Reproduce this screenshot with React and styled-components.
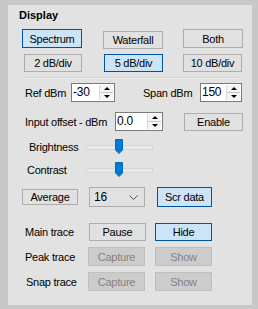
import React from 'react';
import styled, { createGlobalStyle, css } from 'styled-components';

const Global = createGlobalStyle`
	html, body { margin: 0; padding: 0; background: #c8c8c8; }
	body { font-family: "Liberation Sans", Arial, sans-serif; font-size: 11px; letter-spacing: -0.25px; color: #000; }
`;

const Frame = styled.div`
	width: 258px;
	height: 309px;
	padding: 5px 0 0 8px;
	box-sizing: border-box;
`;

const Panel = styled.div`
	width: 244px;
	height: 300px;
	background: #e2e2e2;
	box-sizing: border-box;
	padding-top: 4px;
`;

const Title = styled.div`
	font-weight: bold;
	font-size: 11px;
	letter-spacing: 0;
	line-height: 13px;
	padding-left: 11px;
`;

const Row = styled.div`
	display: flex;
	align-items: ${(p) => p.$align || 'center'};
	height: ${(p) => p.$h}px;
	margin-top: ${(p) => p.$mt}px;
	padding-left: ${(p) => p.$pl}px;
`;

const Divider = styled.div`
	height: 1px;
	margin: 5px 9px 0 16px;
	background: #d6d6d6;
	border-bottom: 1px solid #ececec;
`;

const Label = styled.span`
	width: ${(p) => p.$w}px;
	margin-left: ${(p) => p.$ml || 0}px;
	flex: none;
	line-height: 14px;
	white-space: nowrap;
`;

const Button = styled.div`
	flex: none;
	box-sizing: border-box;
	width: ${(p) => p.$w || 60}px;
	height: ${(p) => p.$h || 19}px;
	margin-left: ${(p) => p.$ml || 0}px;
	margin-top: ${(p) => p.$dy || 0}px;
	display: flex;
	align-items: center;
	justify-content: center;
	background: #e1e1e1;
	border: 1px solid #adadad;
	line-height: 14px;
	white-space: nowrap;
	${(p) =>
		p.$active &&
		css`
			background: #cce4f7;
			border-color: #005499;
		`}
	${(p) =>
		p.$disabled &&
		css`
			background: #cccccc;
			border-color: #bfbfbf;
			color: #838383;
		`}
`;

const NumBox = styled.div`
	flex: none;
	box-sizing: border-box;
	width: ${(p) => p.$w}px;
	height: 19px;
	background: #fff;
	border: 1px solid #7a7a7a;
	display: flex;
	align-items: stretch;
`;

const NumText = styled.span`
	flex: 1;
	padding-left: 1px;
	line-height: 16px;
	font-size: 12px;
`;

const Spin = styled.div`
	width: 13px;
	display: flex;
	flex-direction: column;
	border-left: 1px solid #d9d9d9;
	margin: 1px 1px 1px 0;
`;

const SpinHalf = styled.div`
	flex: 1;
	display: flex;
	align-items: center;
	justify-content: center;
	background: #f4f4f4;
	& + & { border-top: 1px solid #c8c8c8; }
`;

const Arrow = styled.div`
	width: 0;
	height: 0;
	border-left: 3px solid transparent;
	border-right: 3px solid transparent;
	${(p) => (p.$up ? 'border-bottom: 3px solid #000;' : 'border-top: 3px solid #000;')}
`;

const Track = styled.div`
	position: relative;
	flex: none;
	width: 65px;
	height: 3px;
	background: #e7eaea;
	border: 1px solid #d6d6d6;
`;

const Thumb = styled.svg`
	position: absolute;
	left: 28px;
	top: -7px;
`;

const Combo = styled.div`
	flex: none;
	box-sizing: border-box;
	width: 56px;
	height: 20px;
	margin-left: 11px;
	background: #e1e1e1;
	border: 1px solid #adadad;
	display: flex;
	align-items: center;
	justify-content: space-between;
	padding: 0 6px 0 4px;
	line-height: 14px;
	font-size: 12px;
`;

function NumericUpDown({ value, w }) {
	return (
		<NumBox $w={w}>
			<NumText>{value}</NumText>
			<Spin>
				<SpinHalf>
					<Arrow $up />
				</SpinHalf>
				<SpinHalf>
					<Arrow />
				</SpinHalf>
			</Spin>
		</NumBox>
	);
}

function Slider() {
	return (
		<Track>
			<Thumb width="8" height="15" viewBox="0 0 8 15">
				<path d="M0.5 0.5 H7.5 V11 L4 14.5 L0.5 11 Z" fill="#007ad9" stroke="#006cc1" />
			</Thumb>
		</Track>
	);
}

export default function App() {
	return (
		<Frame>
			<Global />
			<Panel>
				<Title>Display</Title>

				<Row $mt={7} $h={19} $pl={14} $align="flex-start">
					<Button $active>Spectrum</Button>
					<Button $ml={21} $h={18} $dy={2}>Waterfall</Button>
					<Button $ml={20} $h={19}>Both</Button>
				</Row>
				<Row $mt={6} $h={18} $pl={16}>
					<Button $w={58} $h={18}>2 dB/div</Button>
					<Button $w={59} $h={18} $ml={22} $active>5 dB/div</Button>
					<Button $w={59} $h={18} $ml={20}>10 dB/div</Button>
				</Row>

				<Divider />

				<Row $mt={4} $h={19} $pl={17}>
					<Label $w={46}>Ref dBm</Label>
					<NumericUpDown value="-30" w={44} />
					<Label $w={57} $ml={28}>Span dBm</Label>
					<NumericUpDown value="150" w={42} />
				</Row>
				<Row $mt={10} $h={19} $pl={17}>
					<Label $w={90}>Input offset - dBm</Label>
					<NumericUpDown value="0.0" w={48} />
					<Button $w={59} $h={18} $ml={21}>Enable</Button>
				</Row>

				<Row $mt={9} $h={14} $pl={21}>
					<Label $w={57}>Brightness</Label>
					<Slider />
				</Row>
				<Row $mt={9} $h={14} $pl={19}>
					<Label $w={59}>Contrast</Label>
					<Slider />
				</Row>

				<Row $mt={10} $h={20} $pl={14}>
					<Button $w={56} $h={16}>Average</Button>
					<Combo>
						<span>16</span>
						<svg width="9" height="5" viewBox="0 0 9 5">
							<path d="M0.5 0.5 L4.5 4.5 L8.5 0.5" fill="none" stroke="#555" />
						</svg>
					</Combo>
					<Button $w={55} $h={20} $ml={12} $active>Scr data</Button>
				</Row>

				<Row $mt={16} $h={18} $pl={17}>
					<Label $w={64}>Main trace</Label>
					<Button $w={57} $h={18}>Pause</Button>
					<Button $w={57} $h={18} $ml={9} $active>Hide</Button>
				</Row>
				<Row $mt={6} $h={19} $pl={17}>
					<Label $w={63}>Peak trace</Label>
					<Button $w={57} $h={19} $disabled>Capture</Button>
					<Button $w={57} $h={19} $ml={10} $disabled>Show</Button>
				</Row>
				<Row $mt={6} $h={19} $pl={18}>
					<Label $w={62}>Snap trace</Label>
					<Button $w={57} $h={19} $disabled>Capture</Button>
					<Button $w={57} $h={19} $ml={10} $disabled>Show</Button>
				</Row>
			</Panel>
		</Frame>
	);
}
